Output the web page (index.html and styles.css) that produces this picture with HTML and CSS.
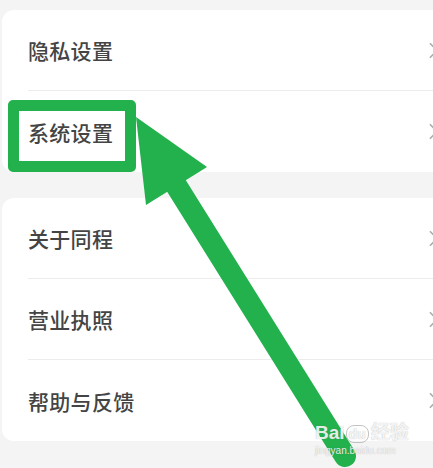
FILE: index.html
```html
<!DOCTYPE html>
<html lang="zh-CN">
<head>
  <meta charset="UTF-8"/>
  <meta name="viewport" content="width=device-width, initial-scale=1"/>
  <title>设置</title>
  <link rel="stylesheet" href="styles.css">
</head>
<body>

  <div class="page">
    <div class="card">
      <div class="row">
        <span class="label">隐私设置</span>
        <svg class="chev" viewBox="0 0 10 18"><polyline points="1,1 9,9 1,17"/></svg>
      </div>
      <div class="row">
        <span class="label">系统设置</span>
        <svg class="chev" viewBox="0 0 10 18"><polyline points="1,1 9,9 1,17"/></svg>
      </div>
    </div>

    <div class="card">
      <div class="row">
        <span class="label">关于同程</span>
        <svg class="chev" viewBox="0 0 10 18"><polyline points="1,1 9,9 1,17"/></svg>
      </div>
      <div class="row">
        <span class="label">营业执照</span>
        <svg class="chev" viewBox="0 0 10 18"><polyline points="1,1 9,9 1,17"/></svg>
      </div>
      <div class="row">
        <span class="label">帮助与反馈</span>
        <svg class="chev" viewBox="0 0 10 18"><polyline points="1,1 9,9 1,17"/></svg>
      </div>
    </div>
  </div>

  <!-- annotation overlay -->
  <div class="highlight"></div>
  <svg class="arrow" viewBox="0 0 433 468" xmlns="http://www.w3.org/2000/svg">
    <line x1="174" y1="182" x2="345" y2="456" stroke="#22b14c" stroke-width="22" stroke-linecap="round"/>
    <polygon points="136,117 146,205 207,167" fill="#22b14c"/>
  </svg>

  <div class="watermark">
    <div class="wm-logo">Bai<span class="wm-du">du</span>经验</div>
    <div class="wm-url">jingyan.baidu.com</div>
  </div>

</body>
</html>
```

FILE: styles.css
```css
/* --- Reset & Body --- */
* { box-sizing: border-box; margin: 0; padding: 0; }
html, body { width: 100%; height: 100%; overflow: hidden; }
body {
  background: #f4f4f4;
  font-family: "Noto Sans CJK SC", "Noto Sans", sans-serif;
  position: relative;
}

/* --- Cards --- */
.page {
  display: flex;
  flex-direction: column;
  gap: 26px;
  padding: 10px 0 0 2px;
}
.card {
  width: 450px;
  background: #ffffff;
  border-radius: 12px;
  padding-left: 26px;
}
.row {
  height: 81px;
  display: flex;
  align-items: center;
  justify-content: space-between;
  padding-right: 14px;
  border-bottom: 1px solid #ececec;
}
.row:last-child { border-bottom: none; }
.label {
  font-size: 21px;
  font-weight: 500;
  color: #444444;
  letter-spacing: 0.3px;
}
.chev {
  width: 9px; height: 17px;
  fill: none; stroke: #acacac; stroke-width: 1.8;
}

/* --- Green annotation --- */
.highlight {
  position: absolute;
  left: 8px; top: 100px;
  width: 128px; height: 72px;
  border: 11px solid #22b14c;
  border-radius: 5px;
}
.arrow {
  position: absolute;
  top: 0; left: 0;
  width: 433px; height: 468px;
}

/* --- Watermark --- */
.watermark {
  position: absolute;
  left: 315px; top: 423px;
  color: rgba(255,255,255,0.85);
  text-shadow: 0 0 1px rgba(120,120,120,0.6);
  font-family: "Liberation Sans", "Noto Sans CJK SC", sans-serif;
  line-height: 1;
}
.wm-logo { font-size: 19px; font-weight: bold; }
.wm-du {
  font-size: 14px;
  border: 1px solid rgba(170,170,170,0.7);
  border-radius: 8px;
  padding: 0 2px;
  margin: 0 2px 0 1px;
}
.wm-url { font-size: 10px; margin-top: 4px; }
```
